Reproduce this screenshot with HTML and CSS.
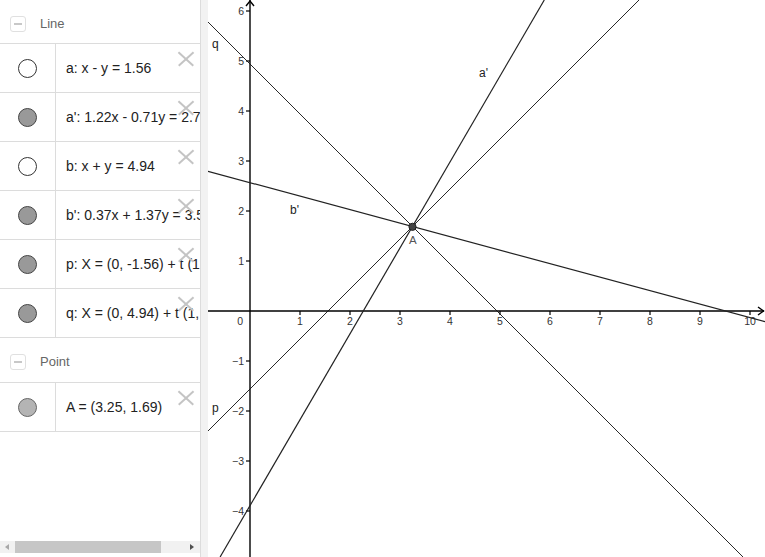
FILE: index.html
```html
<!DOCTYPE html>
<html>
<head>
<meta charset="utf-8">
<link rel="stylesheet" href="styles.css">
</head>
<body>
<div class="app">
  <div class="panel">
    <div class="list">
      <div class="group-head"><span class="toggle"><span class="minus"></span></span><span class="group-name">Line</span></div>
      <div class="row"><div class="mark"><span class="dot open"></span></div><div class="expr">a: x - y = 1.56</div><span class="del"></span></div>
      <div class="row"><div class="mark"><span class="dot full"></span></div><div class="expr">a': 1.22x - 0.71y = 2.77</div><span class="del"></span></div>
      <div class="row"><div class="mark"><span class="dot open"></span></div><div class="expr">b: x + y = 4.94</div><span class="del"></span></div>
      <div class="row"><div class="mark"><span class="dot full"></span></div><div class="expr">b': 0.37x + 1.37y = 3.52</div><span class="del"></span></div>
      <div class="row"><div class="mark"><span class="dot full"></span></div><div class="expr">p: X = (0, -1.56) + t (1, 1)</div><span class="del"></span></div>
      <div class="row"><div class="mark"><span class="dot full"></span></div><div class="expr">q: X = (0, 4.94) + t (1, -1)</div><span class="del"></span></div>
      <div class="group-head point-head"><span class="toggle"><span class="minus"></span></span><span class="group-name">Point</span></div>
      <div class="row"><div class="mark"><span class="dot light"></span></div><div class="expr">A = (3.25, 1.69)</div><span class="del"></span></div>
    </div>
    <div class="hscroll">
      <span class="arr arr-left"></span>
      <span class="thumb"></span>
      <span class="arr arr-right"></span>
    </div>
  </div>
  <div class="divider"></div>
  <div class="graph">
    <svg class="plot" width="557" height="557" viewBox="208 0 557 557" xmlns="http://www.w3.org/2000/svg">
      <g class="axes">
        <line x1="208" y1="311" x2="764" y2="311"/>
        <line x1="250" y1="0" x2="250" y2="557"/>
        <polyline points="246,6 250,1 254,6"/>
        <polyline points="758,307 763.5,311 758,315"/>
      </g>
      <g class="ticks">
        <line x1="300" y1="311" x2="300" y2="315"/>
        <line x1="350" y1="311" x2="350" y2="315"/>
        <line x1="400" y1="311" x2="400" y2="315"/>
        <line x1="450" y1="311" x2="450" y2="315"/>
        <line x1="500" y1="311" x2="500" y2="315"/>
        <line x1="550" y1="311" x2="550" y2="315"/>
        <line x1="600" y1="311" x2="600" y2="315"/>
        <line x1="650" y1="311" x2="650" y2="315"/>
        <line x1="700" y1="311" x2="700" y2="315"/>
        <line x1="750" y1="311" x2="750" y2="315"/>
        <line x1="246" y1="11" x2="250" y2="11"/>
        <line x1="246" y1="61" x2="250" y2="61"/>
        <line x1="246" y1="111" x2="250" y2="111"/>
        <line x1="246" y1="161" x2="250" y2="161"/>
        <line x1="246" y1="211" x2="250" y2="211"/>
        <line x1="246" y1="261" x2="250" y2="261"/>
        <line x1="246" y1="361" x2="250" y2="361"/>
        <line x1="246" y1="411" x2="250" y2="411"/>
        <line x1="246" y1="461" x2="250" y2="461"/>
        <line x1="246" y1="511" x2="250" y2="511"/>
      </g>
      <g class="tick-labels">
        <text x="243" y="325" text-anchor="end">0</text>
        <text x="300" y="325" text-anchor="middle">1</text>
        <text x="350" y="325" text-anchor="middle">2</text>
        <text x="400" y="325" text-anchor="middle">3</text>
        <text x="450" y="325" text-anchor="middle">4</text>
        <text x="500" y="325" text-anchor="middle">5</text>
        <text x="550" y="325" text-anchor="middle">6</text>
        <text x="600" y="325" text-anchor="middle">7</text>
        <text x="650" y="325" text-anchor="middle">8</text>
        <text x="700" y="325" text-anchor="middle">9</text>
        <text x="750" y="325" text-anchor="middle">10</text>
        <text x="244" y="15" text-anchor="end">6</text>
        <text x="244" y="65" text-anchor="end">5</text>
        <text x="244" y="115" text-anchor="end">4</text>
        <text x="244" y="165" text-anchor="end">3</text>
        <text x="244" y="215" text-anchor="end">2</text>
        <text x="244" y="265" text-anchor="end">1</text>
        <text x="244" y="365" text-anchor="end">−1</text>
        <text x="244" y="415" text-anchor="end">−2</text>
        <text x="244" y="465" text-anchor="end">−3</text>
        <text x="244" y="515" text-anchor="end">−4</text>
      </g>
      <g class="lines-thin">
        <line x1="208" y1="431" x2="639" y2="0"/>
        <line x1="208" y1="22" x2="743" y2="557"/>
      </g>
      <g class="lines">
        <line x1="220.1" y1="557" x2="544.3" y2="0"/>
        <line x1="208" y1="171.3" x2="765" y2="321.7"/>
      </g>
      <circle class="pt" cx="412.5" cy="226.8" r="3.6"/>
      <g class="labels">
        <text x="212" y="48">q</text>
        <text x="479" y="77">a'</text>
        <text x="290" y="214">b'</text>
        <text x="212" y="412">p</text>
        <text class="pt-label" x="409" y="244">A</text>
      </g>
    </svg>
  </div>
</div>
</body>
</html>
```
FILE: styles.css
```css
html, body {
  margin: 0;
  padding: 0;
  background: #fff;
}
body {
  font-family: "Liberation Sans", Arial, sans-serif;
  overflow: hidden;
}
.app {
  display: flex;
  width: 765px;
  height: 557px;
}
.panel {
  width: 200px;
  height: 557px;
  display: flex;
  flex-direction: column;
  overflow: hidden;
  background: #fff;
}
.list {
  display: flex;
  flex-direction: column;
}
.group-head {
  height: 43px;
  border-bottom: 1px solid #dcdcdc;
  display: flex;
  align-items: center;
  box-sizing: content-box;
}
.group-head.point-head {
  height: 44px;
}
.toggle {
  width: 14px;
  height: 14px;
  border: 1px solid #e0e0e0;
  border-radius: 3px;
  margin: 4px 0 0 10px;
  display: flex;
  align-items: center;
  justify-content: center;
}
.minus {
  width: 8px;
  height: 2px;
  background: #c8c8c8;
}
.group-name {
  margin: 3px 0 0 14px;
  font-size: 13px;
  color: #666;
}
.row {
  position: relative;
  height: 48px;
  border-bottom: 1px solid #dcdcdc;
  display: grid;
  grid-template-columns: 56px 1fr;
}
.mark {
  border-right: 1px solid #dcdcdc;
  display: flex;
  align-items: center;
  justify-content: center;
}
.dot {
  width: 17px;
  height: 17px;
  border-radius: 50%;
  box-sizing: content-box;
}
.dot.open {
  background: #fff;
  border: 1.3px solid #333;
}
.dot.full {
  background: #999;
  border: 1.3px solid #444;
}
.dot.light {
  background: #b4b4b4;
  border: 1.3px solid #666;
}
.expr {
  padding-left: 10px;
  display: flex;
  align-items: center;
  white-space: nowrap;
  overflow: hidden;
  font-size: 14px;
  color: #222;
}
.del {
  position: absolute;
  top: 7px;
  right: 6px;
  width: 16px;
  height: 16px;
}
.del::before, .del::after {
  content: "";
  position: absolute;
  left: -2px;
  top: 7px;
  width: 20px;
  height: 1.6px;
  background: #c4c4c4;
  transform: rotate(42deg);
}
.del::after {
  transform: rotate(-42deg);
}
.hscroll {
  margin-top: auto;
  margin-bottom: 4px;
  height: 12px;
  background: #f1f1f1;
  position: relative;
}
.thumb {
  position: absolute;
  left: 15px;
  width: 146px;
  top: 0;
  bottom: 0;
  background: #c6c6c6;
}
.arr {
  position: absolute;
  top: 3px;
  width: 0;
  height: 0;
  border-top: 3px solid transparent;
  border-bottom: 3px solid transparent;
}
.arr-left {
  left: 5px;
  border-right: 4px solid #a8a8a8;
}
.arr-right {
  left: 190px;
  border-left: 4px solid #505050;
}
.divider {
  width: 7px;
  height: 557px;
  background: #f2f2f2;
  border-left: 1px solid #dcdcdc;
}
.graph {
  flex: 1;
  height: 557px;
  overflow: hidden;
}
.plot {
  display: block;
}
.axes line, .axes polyline {
  stroke: #000;
  stroke-width: 1.4;
  fill: none;
}
.ticks line {
  stroke: #000;
  stroke-width: 1.2;
}
.tick-labels text {
  font-family: "Liberation Sans", Arial, sans-serif;
  font-size: 10.5px;
  fill: #333;
}
.lines-thin line {
  stroke: #111;
  stroke-width: 0.9;
}
.lines line {
  stroke: #222;
  stroke-width: 1.2;
}
.pt {
  fill: #444;
  stroke: #222;
  stroke-width: 1;
}
.labels text {
  font-family: "Liberation Sans", Arial, sans-serif;
  font-size: 12px;
  fill: #222;
}
.labels .pt-label {
  font-size: 11.5px;
  fill: #555;
}
```
